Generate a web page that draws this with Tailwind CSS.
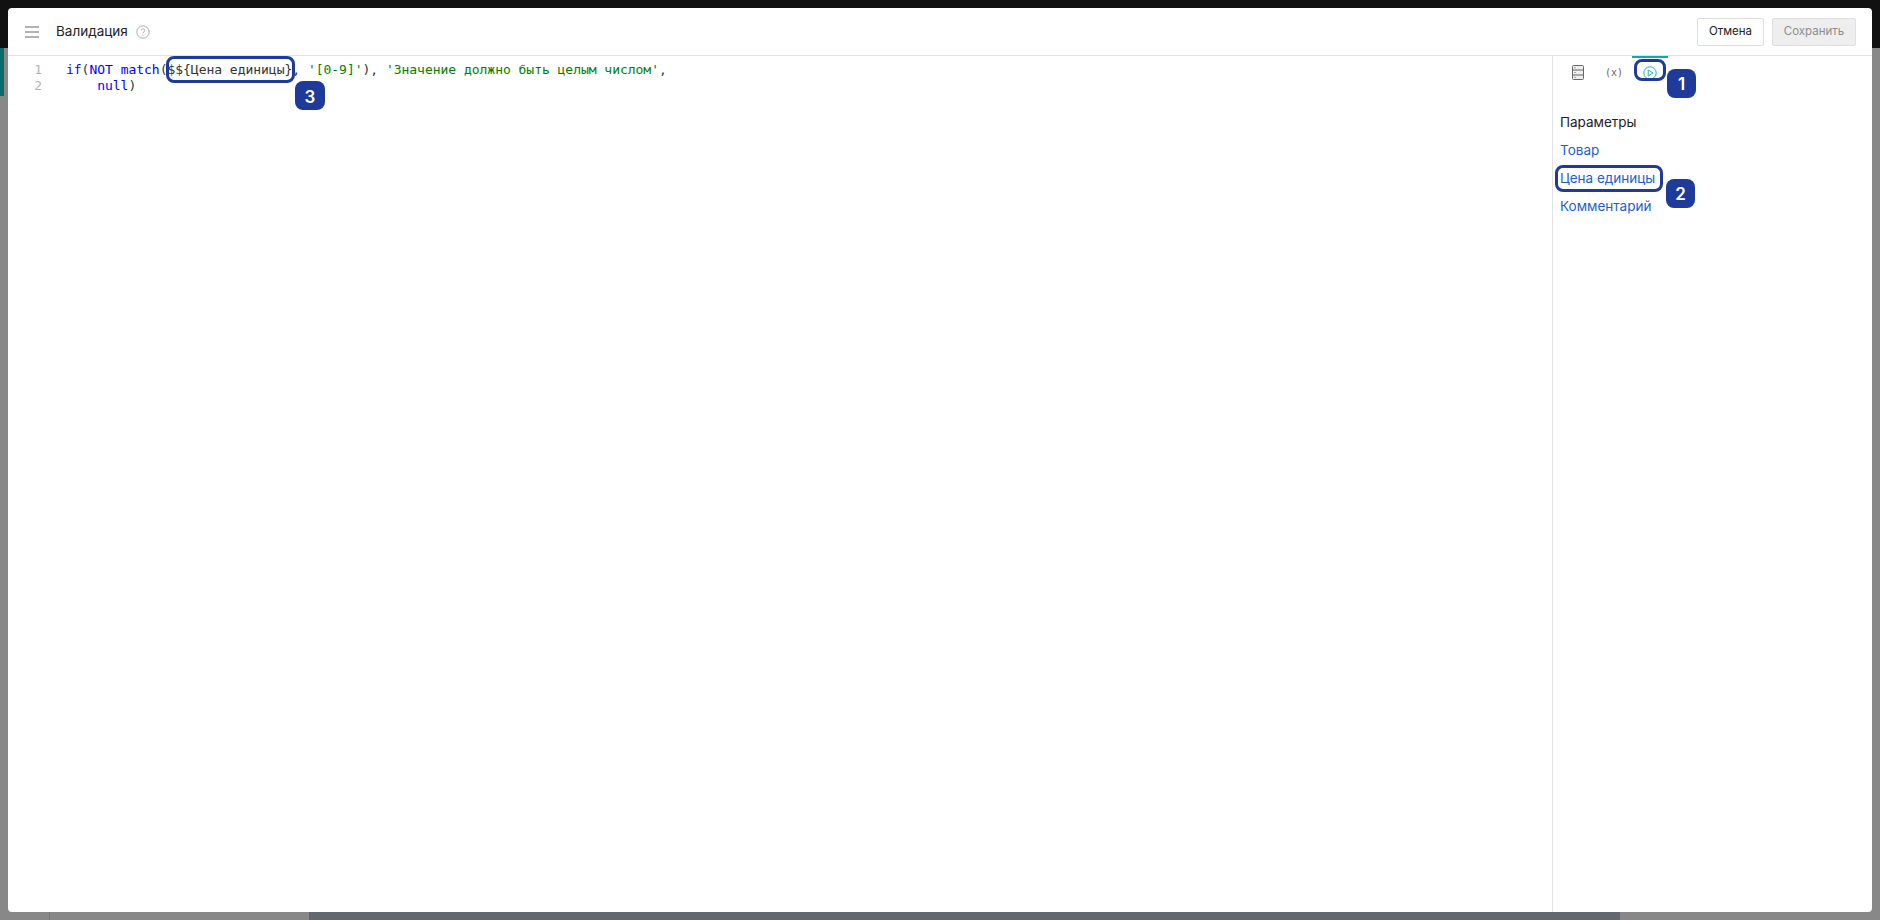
<!DOCTYPE html>
<html lang="en">
<head>
    <meta charset="UTF-8">
    <title>Валидация</title>
    <script src="https://cdn.jsdelivr.net/npm/@tailwindcss/browser@4"></script>
</head>
<body class="font-['Inter',sans-serif]">

<div class="relative w-[1880px] h-[920px] overflow-hidden bg-[#888888]">
    <!-- page behind the modal -->
    <div class="h-[48px] bg-[#111111]"></div>
    <div class="w-[4px] h-[48px] bg-[#0b6b6b]"></div>
    <div class="absolute left-[309px] right-[260px] bottom-0 h-[8px] bg-[#636870]"></div>
    <div class="absolute left-[49px] bottom-0 h-[8px] w-px bg-[#777777]"></div>

    <!-- modal -->
    <div class="absolute inset-[8px] flex flex-col bg-white rounded-[4px] overflow-hidden">
        <header class="h-[48px] flex items-center border-b border-[#e2e2e2] pl-[17px] pr-[16px] shrink-0">
            <svg class="w-[14px] h-[12px] text-[#666666]" viewBox="0 0 14 12" fill="none" stroke="currentColor" stroke-width="1"><path d="M0 1h14M0 6h14M0 11h14"/></svg>
            <span class="ml-[17px] text-[13.5px] text-[#222222]">Валидация</span>
            <svg class="ml-[8px] w-[14px] h-[14px] text-[#aaaaaa]" viewBox="0 0 14 14" fill="none" stroke="currentColor"><circle cx="7" cy="7" r="6.2"/><path d="M5.3 5.5a1.7 1.7 0 1 1 2.6 1.4c-.6.4-.9.7-.9 1.4"/><path d="M7 9.6v1"/></svg>
            <div class="ml-auto flex gap-[8px]">
                <button class="h-[28px] w-[67px] rounded-[2px] border border-[#dddddd] text-[11.5px] text-[#222222]">Отмена</button>
                <button class="h-[28px] w-[84px] rounded-[2px] border border-[#e0e0e0] bg-[#eeeeee] text-[11.5px] text-[#8c8c8c]">Сохранить</button>
            </div>
        </header>

        <div class="flex-1 flex min-h-0">
            <!-- code editor -->
            <main class="relative flex-1 pt-[6px] font-['DejaVu_Sans_Mono',monospace] text-[13px] leading-[16px] tracking-[-0.025px] text-[#333333]">
                <div class="flex">
                    <div class="w-[34px] text-right text-[#b5b5b5]">1</div>
                    <div class="ml-[24px] whitespace-pre"><span class="text-[#0000ff]">if</span>(<span class="text-[#0000ff]">NOT match</span>($${Цена единицы}, <span class="text-[#008000]">'[0-9]'</span>), <span class="text-[#008000]">'Значение должно быть целым числом'</span>,</div>
                </div>
                <div class="flex">
                    <div class="w-[34px] text-right text-[#b5b5b5]">2</div>
                    <div class="ml-[24px] whitespace-pre">    <span class="text-[#0000ff]">null</span>)</div>
                </div>
                <div class="absolute left-[158px] top-0 w-[129px] h-[27px] rounded-[8px] border-[3px] border-[#1e3a9a]"></div>
                <div class="absolute left-[287px] top-[25px] w-[30px] h-[29px] pt-[3px] rounded-[8px] bg-[#1e3a9a] text-white text-[17px] font-semibold flex items-center justify-center font-['Inter',sans-serif]">3</div>
            </main>

            <!-- side panel -->
            <aside class="relative w-[320px] border-l border-[#e2e2e2] shrink-0">
                <div class="flex h-[32px] pl-[7px]">
                    <div class="w-[36px] flex items-center justify-center">
                        <svg class="w-[12px] h-[15px] text-[#666666]" viewBox="0 0 12 15" fill="none" stroke="currentColor"><rect x="0.5" y="0.5" width="11" height="14" rx="1" fill="#eeeeee"/><path d="M0.5 5h11M0.5 10h11"/><path d="M2.5 2.7h1M2.5 7.5h1M2.5 12.3h1" stroke-width="1"/></svg>
                    </div>
                    <div class="w-[36px] flex items-center justify-center font-['DejaVu_Sans_Mono',monospace] text-[10px] text-[#666666]">(x)</div>
                    <div class="w-[36px] flex items-center justify-center border-t-[2px] border-[#11a8a8]">
                        <svg class="w-[14px] h-[14px] text-[#1cb5b5]" viewBox="0 0 14 14" fill="none" stroke="currentColor"><circle cx="7" cy="7" r="6.2"/><path d="M5.2 4 10 7 5.2 10z"/></svg>
                    </div>
                </div>
                <div class="pl-[7px] mt-[20px] text-[13.5px] leading-[28px]">
                    <div class="text-[#222222]">Параметры</div>
                    <a class="block text-[#1a5fd0]">Товар</a>
                    <a class="block text-[#1a5fd0]">Цена единицы</a>
                    <a class="block text-[#1a5fd0]">Комментарий</a>
                </div>
                <div class="absolute left-[81px] top-[3px] w-[32px] h-[22px] rounded-[8px] border-[3px] border-[#1e3a9a]"></div>
                <div class="absolute left-[114px] top-[13px] w-[29px] h-[29px] pt-[3px] rounded-[8px] bg-[#1e3a9a] text-white text-[17px] font-semibold flex items-center justify-center">1</div>
                <div class="absolute left-[2px] top-[109px] w-[108px] h-[27px] rounded-[8px] border-[3px] border-[#1e3a9a]"></div>
                <div class="absolute left-[113px] top-[123px] w-[29px] h-[29px] pt-[3px] rounded-[8px] bg-[#1e3a9a] text-white text-[17px] font-semibold flex items-center justify-center">2</div>
            </aside>
        </div>
    </div>
</div>

</body>
</html>
